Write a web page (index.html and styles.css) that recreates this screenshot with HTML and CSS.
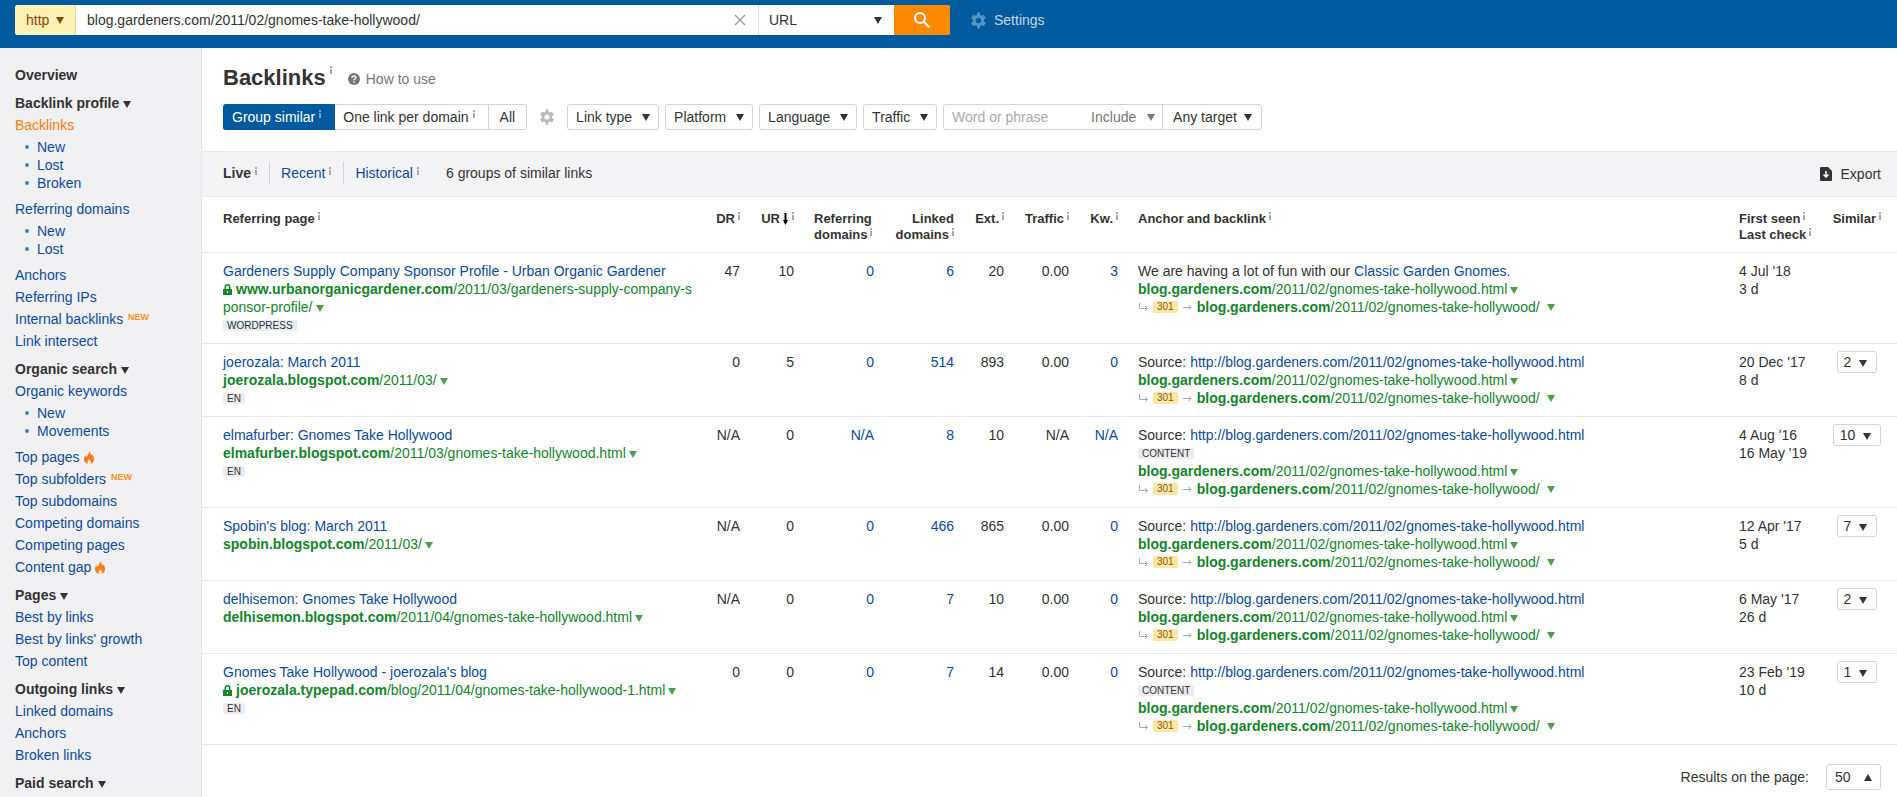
FILE: index.html
```
<!DOCTYPE html>
<html lang="en">
<head>
  <meta charset="UTF-8" />
  <meta name="viewport" content="width=device-width, initial-scale=1.0" />
  <title>Backlinks: blog.gardeners.com/2011/02/gnomes-take-hollywood/</title>
  <link rel="stylesheet" href="styles.css">
</head>
<body>
  <svg class="sprite" aria-hidden="true">
    <symbol id="i" viewBox="0 0 2 8"><path d="M0 0h2v2H0zM0 3h2v5H0z" fill="currentColor"/></symbol>
    <symbol id="gear" viewBox="0 0 24 24"><path fill="currentColor" d="M19.4 13c0-.3.1-.6.1-1s0-.7-.1-1l2.5-1.900c.2-.2.3-.5.1-.7l-2.300-4.100c-.1-.2-.4-.3-.7-.2l-2.900 1.200c-.6-.5-1.300-.9-2-1.200L13.700.9c0-.2-.3-.4-.5-.4h-2.400c-.3 0-.5.2-.5.4l-.4 3.200c-.7.3-1.400.7-2 1.200L5 4.100c-.3-.1-.6 0-.7.2L2 8.400c-.1.2-.1.5.1.7L4.600 11c-.1.300-.1.7-.1 1s0 .7.1 1l-2.500 1.900c-.2.2-.3.5-.1.7l2.300 4.100c.1.2.4.3.7.2l2.900-1.200c.6.5 1.300.9 2 1.200l.4 3.200c0 .2.2.4.5.4h2.400c.2 0 .5-.2.5-.4l.4-3.200c.7-.3 1.400-.7 2-1.200l2.900 1.200c.3.1.6 0 .7-.2l2.300-4.100c.1-.2.1-.5-.1-.7zM12 15.800a3.800 3.800 0 1 1 0-7.600 3.800 3.800 0 0 1 0 7.600z"/></symbol>
    <symbol id="flame" viewBox="0 0 10 13"><path fill="#ff7a1a" d="M5.300 0c.3 2 2 3 2.500 4.800l.700-1.300C9.500 5 10 6.300 10 8c0 2.500-1.300 4.200-3.200 5 .6-1.400.2-3-1.700-4.800C3.600 9.700 3.200 11.500 3.900 13 1.600 12.400 0 10.700 0 8.300c0-1.500.4-2.800 1.200-4l.9 1.700C3.500 4.300 5.200 2.600 5.300 0z"/></symbol>
    <symbol id="lock" viewBox="0 0 9 11"><path fill="currentColor" d="M1.500 5V3a3 3 0 0 1 6 0v2H9v6H0V5zm1.500 0h3V3a1.500 1.500 0 0 0-3 0zm1 2v2h1V7z"/></symbol>
    <symbol id="down-right" viewBox="0 0 9 9"><path fill="none" stroke="#aaa" d="M.5 0v5.500h8M6 3l2.500 2.500L6 8"/></symbol>
    <symbol id="right" viewBox="0 0 9 9"><path fill="none" stroke="#aaa" d="M0 4.500h8M5.500 2l2.500 2.500L5.500 7"/></symbol>
  </svg>

  <header class="topbar">
    <form class="search">
      <span class="select select-http"><select aria-label="Protocol"><option>http</option></select></span>
      <input type="text" aria-label="Target" value="blog.gardeners.com/2011/02/gnomes-take-hollywood/">
      <button type="button" class="clear" aria-label="Clear"><svg width="12" height="12" viewBox="0 0 12 12"><path d="M1 1l10 10M11 1L1 11" stroke="#999" stroke-width="1.300"/></svg></button>
      <span class="select select-mode"><select aria-label="Mode"><option>URL</option></select></span>
      <button type="button" class="go" aria-label="Search"><svg width="18" height="18" viewBox="0 0 18 18" fill="none" stroke="#fff" stroke-width="2"><circle cx="7" cy="7" r="5"/><path d="M10.500 10.500l6 6"/></svg></button>
    </form>
    <a href="#" class="settings"><svg width="17" height="17"><use href="#gear"/></svg>Settings</a>
  </header>

  <div class="layout">
    <nav class="sidebar">
      <h3><a href="#">Overview</a></h3>
      <h3 class="caret">Backlink profile</h3>
      <a href="#" class="active">Backlinks</a>
      <ul>
        <li><a href="#">New</a></li>
        <li><a href="#">Lost</a></li>
        <li><a href="#">Broken</a></li>
      </ul>
      <a href="#">Referring domains</a>
      <ul>
        <li><a href="#">New</a></li>
        <li><a href="#">Lost</a></li>
      </ul>
      <a href="#">Anchors</a>
      <a href="#">Referring IPs</a>
      <a href="#">Internal backlinks <sup>NEW</sup></a>
      <a href="#">Link intersect</a>
      <h3 class="caret">Organic search</h3>
      <a href="#">Organic keywords</a>
      <ul>
        <li><a href="#">New</a></li>
        <li><a href="#">Movements</a></li>
      </ul>
      <a href="#">Top pages<svg class="flame"><use href="#flame"/></svg></a>
      <a href="#">Top subfolders <sup>NEW</sup></a>
      <a href="#">Top subdomains</a>
      <a href="#">Competing domains</a>
      <a href="#">Competing pages</a>
      <a href="#">Content gap<svg class="flame"><use href="#flame"/></svg></a>
      <h3 class="caret">Pages</h3>
      <a href="#">Best by links</a>
      <a href="#">Best by links' growth</a>
      <a href="#">Top content</a>
      <h3 class="caret">Outgoing links</h3>
      <a href="#">Linked domains</a>
      <a href="#">Anchors</a>
      <a href="#">Broken links</a>
      <h3 class="caret">Paid search</h3>
    </nav>

    <main>
      <div class="title">
        <h1>Backlinks<svg class="i"><use href="#i"/></svg></h1>
        <a href="#" class="howto"><svg width="12" height="12" viewBox="0 0 12 12"><circle cx="6" cy="6" r="6" fill="#777"/><path d="M4 4.800C4 2.400 8 2.400 8 4.600 8 6 6 5.800 6 7.200M6 8.200v1.500" fill="none" stroke="#fff" stroke-width="1.400"/></svg>How to use</a>
      </div>

      <div class="filters">
        <div class="group">
          <button type="button" class="on">Group similar<svg class="i"><use href="#i"/></svg></button>
          <button type="button">One link per domain<svg class="i"><use href="#i"/></svg></button>
          <button type="button" class="all">All</button>
        </div>
        <button type="button" class="gear" aria-label="Grouping settings"><svg width="16" height="16"><use href="#gear"/></svg></button>
        <span class="select"><select aria-label="Link type"><option>Link type</option></select></span>
        <span class="select"><select aria-label="Platform"><option>Platform</option></select></span>
        <span class="select"><select aria-label="Language"><option>Language</option></select></span>
        <span class="select"><select aria-label="Traffic"><option>Traffic</option></select></span>
        <div class="phrase">
          <input type="text" aria-label="Word or phrase" placeholder="Word or phrase">
          <span class="select include"><select aria-label="Include or exclude"><option>Include</option></select></span>
          <span class="select target"><select aria-label="Target"><option>Any target</option></select></span>
        </div>
      </div>

      <div class="tabs">
        <a href="#" class="current">Live<svg class="i"><use href="#i"/></svg></a>
        <a href="#">Recent<svg class="i"><use href="#i"/></svg></a>
        <a href="#">Historical<svg class="i"><use href="#i"/></svg></a>
        <span class="count">6 groups of similar links</span>
        <button type="button" class="export"><svg width="12" height="14" viewBox="0 0 12 14"><path d="M1 0h7l4 4v9a1 1 0 0 1-1 1H1a1 1 0 0 1-1-1V1a1 1 0 0 1 1-1z" fill="#333"/><path d="M6 4v5M3.500 7.500L6 10l2.500-2.500" fill="none" stroke="#fff" stroke-width="1.500"/></svg>Export</button>
      </div>

      <table>
        <colgroup>
          <col class="c-page"><col class="c-dr"><col class="c-ur"><col class="c-dom"><col class="c-dom"><col class="c-ext"><col class="c-traffic"><col class="c-kw"><col><col class="c-seen"><col class="c-similar">
        </colgroup>
        <thead>
          <tr>
            <th>Referring page<svg class="i"><use href="#i"/></svg></th>
            <th class="num">DR<svg class="i"><use href="#i"/></svg></th>
            <th class="num">UR<svg class="sort" width="7" height="12" viewBox="0 0 7 12"><path d="M3.500 0v10" stroke="#000" stroke-width="2"/><path d="M1 7h5l-2.500 5z"/></svg><svg class="i"><use href="#i"/></svg></th>
            <th>Referring domains<svg class="i"><use href="#i"/></svg></th>
            <th class="num">Linked domains<svg class="i"><use href="#i"/></svg></th>
            <th class="num">Ext.<svg class="i"><use href="#i"/></svg></th>
            <th class="num">Traffic<svg class="i"><use href="#i"/></svg></th>
            <th class="num">Kw.<svg class="i"><use href="#i"/></svg></th>
            <th>Anchor and backlink<svg class="i"><use href="#i"/></svg></th>
            <th class="seen">First seen<svg class="i"><use href="#i"/></svg><br>Last check<svg class="i"><use href="#i"/></svg></th>
            <th class="similar">Similar<svg class="i"><use href="#i"/></svg></th>
          </tr>
        </thead>
        <tbody>
          <tr>
            <td class="page">
              <a href="#">Gardeners Supply Company Sponsor Profile - Urban Organic Gardener</a>
              <div class="url"><svg class="lock"><use href="#lock"/></svg><a href="#"><b>www.urbanorganicgardener.com</b>/2011/03/gardeners-supply-company-sponsor-profile/</a></div>
              <div><span class="tag tag-cms">WORDPRESS</span></div>
            </td>
            <td class="num">47</td>
            <td class="num">10</td>
            <td class="num"><a href="#">0</a></td>
            <td class="num"><a href="#">6</a></td>
            <td class="num">20</td>
            <td class="num">0.00</td>
            <td class="num"><a href="#">3</a></td>
            <td>
              We are having a lot of fun with our <a href="#">Classic Garden Gnomes.</a>
              <div class="url"><a href="#"><b>blog.gardeners.com</b>/2011/02/gnomes-take-hollywood.html</a></div>
              <div class="url redirect"><svg><use href="#down-right"/></svg><span class="code">301</span><svg><use href="#right"/></svg><a href="#"><b>blog.gardeners.com</b>/2011/02/gnomes-take-hollywood/</a></div>
            </td>
            <td class="seen">4 Jul '18<br>3 d</td>
            <td></td>
          </tr>
          <tr>
            <td class="page">
              <a href="#">joerozala: March 2011</a>
              <div class="url"><a href="#"><b>joerozala.blogspot.com</b>/2011/03/</a></div>
              <div><span class="tag">EN</span></div>
            </td>
            <td class="num">0</td>
            <td class="num">5</td>
            <td class="num"><a href="#">0</a></td>
            <td class="num"><a href="#">514</a></td>
            <td class="num">893</td>
            <td class="num">0.00</td>
            <td class="num"><a href="#">0</a></td>
            <td>
              Source: <a href="#">http://blog.gardeners.com/2011/02/gnomes-take-hollywood.html</a>
              <div class="url"><a href="#"><b>blog.gardeners.com</b>/2011/02/gnomes-take-hollywood.html</a></div>
              <div class="url redirect"><svg><use href="#down-right"/></svg><span class="code">301</span><svg><use href="#right"/></svg><a href="#"><b>blog.gardeners.com</b>/2011/02/gnomes-take-hollywood/</a></div>
            </td>
            <td class="seen">20 Dec '17<br>8 d</td>
            <td class="similar"><button type="button">2</button></td>
          </tr>
          <tr>
            <td class="page">
              <a href="#">elmafurber: Gnomes Take Hollywood</a>
              <div class="url"><a href="#"><b>elmafurber.blogspot.com</b>/2011/03/gnomes-take-hollywood.html</a></div>
              <div><span class="tag">EN</span></div>
            </td>
            <td class="num">N/A</td>
            <td class="num">0</td>
            <td class="num"><a href="#">N/A</a></td>
            <td class="num"><a href="#">8</a></td>
            <td class="num">10</td>
            <td class="num">N/A</td>
            <td class="num"><a href="#">N/A</a></td>
            <td>
              Source: <a href="#">http://blog.gardeners.com/2011/02/gnomes-take-hollywood.html</a>
              <div><span class="tag">CONTENT</span></div>
              <div class="url"><a href="#"><b>blog.gardeners.com</b>/2011/02/gnomes-take-hollywood.html</a></div>
              <div class="url redirect"><svg><use href="#down-right"/></svg><span class="code">301</span><svg><use href="#right"/></svg><a href="#"><b>blog.gardeners.com</b>/2011/02/gnomes-take-hollywood/</a></div>
            </td>
            <td class="seen">4 Aug '16<br>16 May '19</td>
            <td class="similar"><button type="button">10</button></td>
          </tr>
          <tr>
            <td class="page">
              <a href="#">Spobin's blog: March 2011</a>
              <div class="url"><a href="#"><b>spobin.blogspot.com</b>/2011/03/</a></div>
            </td>
            <td class="num">N/A</td>
            <td class="num">0</td>
            <td class="num"><a href="#">0</a></td>
            <td class="num"><a href="#">466</a></td>
            <td class="num">865</td>
            <td class="num">0.00</td>
            <td class="num"><a href="#">0</a></td>
            <td>
              Source: <a href="#">http://blog.gardeners.com/2011/02/gnomes-take-hollywood.html</a>
              <div class="url"><a href="#"><b>blog.gardeners.com</b>/2011/02/gnomes-take-hollywood.html</a></div>
              <div class="url redirect"><svg><use href="#down-right"/></svg><span class="code">301</span><svg><use href="#right"/></svg><a href="#"><b>blog.gardeners.com</b>/2011/02/gnomes-take-hollywood/</a></div>
            </td>
            <td class="seen">12 Apr '17<br>5 d</td>
            <td class="similar"><button type="button">7</button></td>
          </tr>
          <tr>
            <td class="page">
              <a href="#">delhisemon: Gnomes Take Hollywood</a>
              <div class="url"><a href="#"><b>delhisemon.blogspot.com</b>/2011/04/gnomes-take-hollywood.html</a></div>
            </td>
            <td class="num">N/A</td>
            <td class="num">0</td>
            <td class="num"><a href="#">0</a></td>
            <td class="num"><a href="#">7</a></td>
            <td class="num">10</td>
            <td class="num">0.00</td>
            <td class="num"><a href="#">0</a></td>
            <td>
              Source: <a href="#">http://blog.gardeners.com/2011/02/gnomes-take-hollywood.html</a>
              <div class="url"><a href="#"><b>blog.gardeners.com</b>/2011/02/gnomes-take-hollywood.html</a></div>
              <div class="url redirect"><svg><use href="#down-right"/></svg><span class="code">301</span><svg><use href="#right"/></svg><a href="#"><b>blog.gardeners.com</b>/2011/02/gnomes-take-hollywood/</a></div>
            </td>
            <td class="seen">6 May '17<br>26 d</td>
            <td class="similar"><button type="button">2</button></td>
          </tr>
          <tr>
            <td class="page">
              <a href="#">Gnomes Take Hollywood - joerozala's blog</a>
              <div class="url"><svg class="lock"><use href="#lock"/></svg><a href="#"><b>joerozala.typepad.com</b>/blog/2011/04/gnomes-take-hollywood-1.html</a></div>
              <div><span class="tag">EN</span></div>
            </td>
            <td class="num">0</td>
            <td class="num">0</td>
            <td class="num"><a href="#">0</a></td>
            <td class="num"><a href="#">7</a></td>
            <td class="num">14</td>
            <td class="num">0.00</td>
            <td class="num"><a href="#">0</a></td>
            <td>
              Source: <a href="#">http://blog.gardeners.com/2011/02/gnomes-take-hollywood.html</a>
              <div><span class="tag">CONTENT</span></div>
              <div class="url"><a href="#"><b>blog.gardeners.com</b>/2011/02/gnomes-take-hollywood.html</a></div>
              <div class="url redirect"><svg><use href="#down-right"/></svg><span class="code">301</span><svg><use href="#right"/></svg><a href="#"><b>blog.gardeners.com</b>/2011/02/gnomes-take-hollywood/</a></div>
            </td>
            <td class="seen">23 Feb '19<br>10 d</td>
            <td class="similar"><button type="button">1</button></td>
          </tr>
        </tbody>
      </table>

      <div class="pager">
        <label for="per-page">Results on the page:</label>
        <span class="select up"><select id="per-page"><option>50</option></select></span>
      </div>
    </main>
  </div>
</body>
</html>
```

FILE: styles.css
```
* {
  box-sizing: border-box;
}
body {
  margin: 0;
  font: 14px/18px "Liberation Sans", Arial, sans-serif;
  color: #333;
  background: #fff;
}
a {
  color: #0b4aa0;
  text-decoration: none;
}
button, input, select {
  font: inherit;
  color: inherit;
  margin: 0;
  padding: 0;
  border: 0;
  border-radius: 0;
  background: none;
  appearance: none;
}
button {
  cursor: pointer;
}
.sprite {
  display: none;
}
.i {
  width: 2px;
  height: 8px;
  margin-left: 4px;
  color: #aaa;
  vertical-align: 3px;
}

/* drop-downs: the arrow lies over the right end of the select */
.select {
  position: relative;
  display: inline-flex;
  height: 26px;
}
.select select {
  padding: 0 25px 0 8px;
  border: 1px solid #d5d5d5;
  border-radius: 3px;
}
.select::after {
  content: "";
  position: absolute;
  right: 9px;
  top: 10px;
  border: 4px solid transparent;
  border-top: 7px solid #333;
  border-bottom: 0;
  pointer-events: none;
}
.select.up::after {
  border-top: 0;
  border-bottom: 7px solid #333;
}
.select.up select {
  padding-right: 29px;
}

/* top bar */
.topbar {
  display: flex;
  align-items: flex-start;
  gap: 20px;
  height: 48px;
  padding: 5px 15px;
  background: #005a9e;
}
.search {
  display: flex;
  flex: 0 1 935px;
  height: 30px;
  background: #fff;
  border-radius: 3px;
  overflow: hidden;
}
.search input {
  flex: 1;
  min-width: 0;
  padding: 0 0 0 11px;
}
.search .select {
  height: 30px;
}
.search select {
  border: 0;
  border-radius: 0;
}
.search .select::after {
  top: 12px;
}
.select-http select {
  width: 61px;
  padding: 0 0 0 11px;
  background: #fff0b3;
  border-right: 1px solid #e0d6a8;
  color: #7d4a0c;
}
.search .select-http::after {
  right: 12px;
  border-top-color: #7d4a0c;
}
.clear {
  display: flex;
  align-items: center;
  padding: 0 12px;
}
.select-mode select {
  width: 136px;
  padding: 0 0 0 10px;
  border-left: 1px solid #ddd;
}
.search .select-mode::after {
  right: 12px;
}
.go {
  display: flex;
  align-items: center;
  justify-content: center;
  width: 56px;
  background: #ff8a00;
}
.settings {
  display: flex;
  align-items: center;
  gap: 7px;
  height: 30px;
  color: #c3d8e9;
}
.settings svg {
  color: #5694c4;
}

.layout {
  display: flex;
  align-items: stretch;
  min-height: calc(100vh - 48px);
}

/* sidebar */
.sidebar {
  flex: none;
  width: 202px;
  padding: 10px 0 0 15px;
  background: #f1f1f4;
  border-right: 1px solid #e4e4e7;
}
.sidebar > a, .sidebar h3 {
  display: block;
  line-height: 22px;
}
.sidebar h3 {
  margin: 6px 0 0;
  font-size: 14px;
}
.sidebar h3 a {
  color: #333;
}
.sidebar .caret::after {
  content: "";
  display: inline-block;
  margin-left: 4px;
  border: 4px solid transparent;
  border-top: 7px solid #333;
  border-bottom: 0;
}
.sidebar .active {
  color: #ff7a00;
}
.sidebar ul {
  margin: 2px 0 6px;
  padding: 0;
  list-style: none;
}
.sidebar li {
  display: flex;
  align-items: center;
  gap: 8px;
  padding-left: 10px;
}
.sidebar li::before {
  content: "";
  width: 4px;
  height: 4px;
  border-radius: 50%;
  background: #4a7fc0;
}
.sidebar sup {
  margin-left: 1px;
  font-size: 9px;
  font-weight: bold;
  line-height: 9px;
  color: #ff8f1c;
  vertical-align: 4px;
}
.flame {
  width: 10px;
  height: 13px;
  margin-left: 4px;
  vertical-align: -2px;
}

/* page head */
main {
  flex: 1;
  min-width: 0;
}
.title {
  display: flex;
  align-items: center;
  gap: 16px;
  padding: 17px 16px 0 21px;
}
.title h1 {
  margin: 0;
  font-size: 22px;
  line-height: 26px;
}
.title .i {
  vertical-align: 11px;
}
.howto {
  display: flex;
  align-items: center;
  gap: 6px;
  color: #777;
  padding-top: 2px;
}
.filters {
  display: flex;
  gap: 6px;
  padding: 13px 16px 21px 21px;
}
.group {
  display: flex;
  height: 26px;
}
.group button {
  padding: 0 13px 0 8px;
  border: 1px solid #d5d5d5;
  border-left: 0;
}
.group .i {
  vertical-align: 4px;
}
.group .all {
  padding: 0 11px;
  border-radius: 0 3px 3px 0;
}
.group .on {
  padding-left: 9px;
  background: #005a9e;
  border-color: #005a9e;
  border-radius: 3px 0 0 3px;
  color: #fff;
}
.group .on .i {
  color: #6fa3cc;
}
.gear {
  display: flex;
  align-items: center;
  margin: 0 6px;
  color: #bbb;
}
.phrase {
  display: flex;
  height: 26px;
  border: 1px solid #d5d5d5;
  border-radius: 3px;
}
.phrase input {
  width: 138px;
  padding: 0 0 0 8px;
}
.phrase input::placeholder {
  color: #aaa;
}
.phrase .select {
  height: 24px;
}
.phrase .select::after {
  top: 9px;
}
.phrase select {
  border: 0;
}
.phrase .include select {
  padding-left: 9px;
  border: 0;
  color: #777;
}
.phrase .include::after {
  right: 7px;
  border-top-color: #777;
}
.phrase .target select {
  padding: 0 24px 0 10px;
  border: 0;
  border-left: 1px solid #d5d5d5;
  border-radius: 0;
}

/* live / recent / historical */
.tabs {
  display: flex;
  align-items: center;
  height: 46px;
  padding: 0 16px 2px 21px;
  background: #f4f4f6;
  border-top: 1px solid #ebebed;
  border-bottom: 1px solid #ebebed;
}
.tabs a {
  margin-right: 11px;
  padding-right: 12px;
  border-right: 1px solid #d5d5d5;
  line-height: 22px;
}
.tabs .current {
  color: #333;
  font-weight: bold;
}
.tabs a:nth-of-type(3) {
  border: 0;
  margin-right: 15px;
}
.export {
  display: flex;
  align-items: center;
  gap: 9px;
  margin-left: auto;
  padding-top: 2px;
}

/* table */
table {
  width: 100%;
  table-layout: fixed;
  border-collapse: separate;
  border-spacing: 0;
}
.c-page { width: 503px; }
.c-dr { width: 45px; }
.c-ur { width: 54px; }
.c-dom { width: 80px; }
.c-ext { width: 50px; }
.c-traffic { width: 65px; }
.c-kw { width: 49px; }
.c-seen { width: 88px; }
.c-similar { width: 80px; }
th, td {
  text-align: left;
  vertical-align: top;
  border-bottom: 1px solid #e8e8e8;
}
th {
  padding: 14px 10px 9px;
  font-size: 13px;
  line-height: 16px;
}
td {
  padding: 9px 10px;
}
th:first-child, td:first-child {
  padding-left: 21px;
}
.num {
  text-align: right;
}
th .i {
  margin-left: 3px;
}
.seen, th.similar {
  white-space: nowrap;
}
.sort {
  margin-left: 2px;
  vertical-align: -2px;
}
.page .url {
  word-break: break-all;
}
.url a {
  color: #13852a;
}
.url::after {
  content: "";
  display: inline-block;
  margin-left: 3px;
  border: 4px solid transparent;
  border-top: 7px solid #4b9e4b;
  border-bottom: 0;
}
.lock {
  width: 9px;
  height: 11px;
  margin-right: 4px;
  color: #13852a;
  vertical-align: -1px;
}
.tag, .code {
  display: inline-block;
  padding: 0 4px;
  border-radius: 2px;
  font-size: 10px;
  line-height: 11px;
  background: #ebebf0;
  vertical-align: 1px;
}
.tag-cms {
  background: #e4edf5;
}
.redirect {
  display: flex;
  align-items: center;
}
.redirect svg {
  width: 9px;
  height: 9px;
  margin: 0 5px 0 1px;
}
.redirect .code {
  margin-right: 4px;
  line-height: 12px;
  background: #ffe7a3;
  color: #8a5a14;
}
.redirect::after {
  margin-left: 7px;
}
th.similar {
  padding-left: 0;
  padding-right: 16px;
  text-align: right;
}
td.similar {
  padding: 7px 0 0;
  text-align: center;
}
.similar button {
  height: 22px;
  padding: 0 9px 0 6px;
  border: 1px solid #d5d5d5;
  border-radius: 3px;
}
.similar button::after {
  content: "";
  display: inline-block;
  margin-left: 8px;
  border: 4px solid transparent;
  border-top: 7px solid #333;
  border-bottom: 0;
}

.pager {
  display: flex;
  align-items: center;
  justify-content: flex-end;
  gap: 17px;
  padding: 19px 16px 7px;
}
```
